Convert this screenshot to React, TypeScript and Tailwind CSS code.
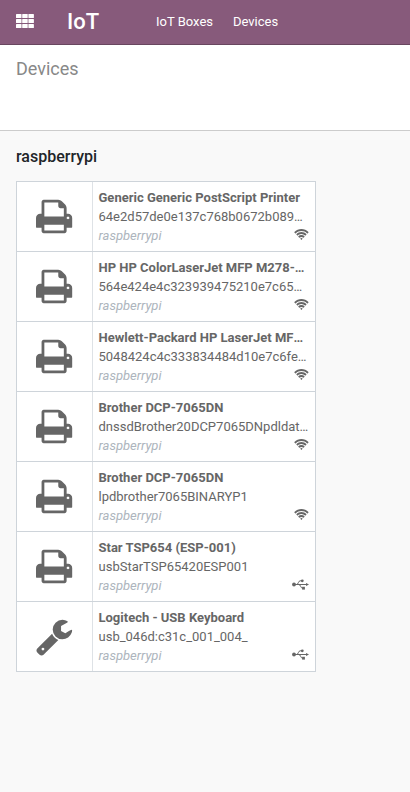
import React from "react";

type Device = { name: string; clipped?: boolean; identifier: string; kind: "printer" | "keyboard"; link: "wifi" | "usb" };

const devices: Device[] = [
  { name: "Generic Generic PostScript Printer", identifier: "64e2d57de0e137c768b0672b089…", kind: "printer", link: "wifi" },
  { name: "HP HP ColorLaserJet MFP M278-", clipped: true, identifier: "564e424e4c323939475210e7c65…", kind: "printer", link: "wifi" },
  { name: "Hewlett-Packard HP LaserJet MF", clipped: true, identifier: "5048424c4c333834484d10e7c6fe…", kind: "printer", link: "wifi" },
  { name: "Brother DCP-7065DN", identifier: "dnssdBrother20DCP7065DNpdldat…", kind: "printer", link: "wifi" },
  { name: "Brother DCP-7065DN", identifier: "lpdbrother7065BINARYP1", kind: "printer", link: "wifi" },
  { name: "Star TSP654 (ESP-001)", identifier: "usbStarTSP65420ESP001", kind: "printer", link: "usb" },
  { name: "Logitech - USB Keyboard", identifier: "usb_046d:c31c_001_004_", kind: "keyboard", link: "usb" },
];

function GridIcon() {
  return (
    <svg width="18" height="14" viewBox="0 0 18 14" fill="currentColor" aria-hidden="true">
      {[0, 5, 10].map((y) =>
        [0, 6.2, 12.4].map((x) => <rect key={`${x}-${y}`} x={x} y={y} width="5.5" height="4" rx="0.6" />)
      )}
    </svg>
  );
}

function PrintIcon() {
  return (
    <svg width="36.2" height="39" viewBox="64 0 1664 1792" fill="currentColor" aria-hidden="true">
      <path d="M448 1536h896v-256h-896v256zm0-640h896v-384h-160q-40 0-68-28t-28-68v-160h-640v640zm1152 64q0-26-19-45t-45-19-45 19-19 45 19 45 45 19 45-19 19-45zm128 0v416q0 13-9.5 22.5t-22.5 9.5h-224v160q0 40-28 68t-68 28h-960q-40 0-68-28t-28-68v-160h-224q-13 0-22.5-9.5t-9.5-22.5v-416q0-79 56.5-135.5t135.5-56.5h64v-544q0-40 28-68t68-28h672q40 0 88 20t76 48l152 152q28 28 48 76t20 88v256h64q79 0 135.5 56.5t56.5 135.5z" />
    </svg>
  );
}

function WrenchIcon() {
  return (
    <svg width="36.2" height="39" viewBox="64 0 1664 1792" fill="currentColor" aria-hidden="true">
      <path d="M448 1472q0-26-19-45t-45-19-45 19-19 45 19 45 45 19 45-19 19-45zm644-420l-682 682q-37 37-90 37-52 0-91-37l-106-108q-38-36-38-90 0-53 38-91l681-681q39 98 114.5 173.5t173.5 114.5zm634-435q0 39-23 106-47 134-164.5 217.5t-258.5 83.5q-185 0-316.5-131.5t-131.5-316.5 131.5-316.5 316.5-131.5q58 0 121.5 16.5t107.5 46.5q16 11 16 28t-16 28l-293 169v224l193 107q5-3 79-48.5t135.5-81 70.5-35.5q15 0 23.5 10t8.5 25z" />
    </svg>
  );
}

function WifiIcon() {
  return (
    <svg className="mb-px" width="14.86" height="14" viewBox="0 0 2048 1792" preserveAspectRatio="none" fill="currentColor" aria-hidden="true">
      <path d="M1024 1523q-20 0-93-73.5t-73-93.5q0-32 62.5-54t103.5-22 103.5 22 62.5 54q0 20-73 93.5t-93 73.5zm270-271q-2 0-40-25t-101.5-50-128.5-25-128.5 25-101 50-40.5 25q-18 0-93.5-75t-75.5-93q0-13 10-23 78-77 196-121t233-44 233 44 196 121q10 10 10 23 0 18-75.5 93t-93.5 75zm273-272q-11 0-23-8-136-105-252-154.5t-268-49.5q-85 0-170.5 22t-149 53-113.5 62-79 53-31 22q-17 0-92-75t-75-93q0-12 10-22 132-132 320-205t380-73 380 73 320 205q10 10 10 22 0 18-75 93t-92 75zm271-271q-11 0-22-9-179-157-371.5-236.5t-420.5-79.5-420.5 79.5-371.5 236.5q-11 9-22 9-17 0-92.5-75t-75.5-93q0-13 10-23 187-186 445-288t527-102 527 102 445 288q10 10 10 23 0 18-75.5 93t-92.5 75z" />
    </svg>
  );
}

function UsbIcon() {
  return (
    <svg className="mb-[2px]" width="17" height="13" viewBox="0 0 17 13" fill="none" stroke="currentColor" aria-hidden="true">
      <path d="M2 6.5H14.5M4.5 6.5C6.5 6.5 6.2 2.8 8.2 2.8H10M6.8 6.5C8.8 6.5 8.5 10.2 10.5 10.2H11" strokeWidth="1" />
      <circle cx="2" cy="6.5" r="1.9" fill="currentColor" stroke="none" />
      <circle cx="10.3" cy="2.8" r="1.4" fill="currentColor" stroke="none" />
      <rect x="10.1" y="8.8" width="2.8" height="2.8" fill="currentColor" stroke="none" />
      <path d="M14 4.9L17 6.5L14 8.1Z" fill="currentColor" stroke="none" />
    </svg>
  );
}

function DeviceCard({ device }: { device: Device }) {
  return (
    <article className="flex h-[71px] border border-[#ced4da] bg-white text-[#666666] not-first:-mt-px">
      <div className="flex w-[76px] shrink-0 items-center justify-center border-r border-[#dee2e6] pb-px">
        {device.kind === "printer" ? <PrintIcon /> : <WrenchIcon />}
      </div>
      <div className="min-w-0 flex-1 pt-[6px] pr-[6px] pl-[5.5px] text-[13px] leading-[19px] whitespace-nowrap">
        <h3 className="font-bold">
          {device.name}
          {device.clipped && <span className="inline-block">…</span>}
        </h3>
        <p>{device.identifier}</p>
        <div className="flex h-[19px] items-center justify-between">
          <em className="text-[#adb5bd]">raspberrypi</em>
          {device.link === "wifi" ? <WifiIcon /> : <UsbIcon />}
        </div>
      </div>
    </article>
  );
}

export default function App() {
  return (
    <div className="min-h-screen bg-[#f9f9f9] font-[Roboto,sans-serif] text-[13px]">
      <header className="flex h-[45px] items-center border-b border-[#68465f] bg-[#875a7b] pl-4 text-white">
        <button className="mb-[2px] w-[51px]" aria-label="Apps">
          <GridIcon />
        </button>
        <h1 className="w-[89px] text-[22px] leading-[44px] font-medium">IoT</h1>
        <nav className="flex gap-5 leading-[44px]">
          <a>IoT Boxes</a>
          <a>Devices</a>
        </nav>
      </header>
      <section className="h-[86px] border-b border-[#cccccc] bg-white px-4 pt-[10px]">
        <h2 className="text-[18px] leading-[27px] text-[#888888]">Devices</h2>
      </section>
      <main className="px-4 pt-[14px]">
        <h2 className="mb-[13px] text-[16px] leading-[23px] font-medium text-[#212529]">raspberrypi</h2>
        <div className="w-[300px]">
          {devices.map((device) => (
            <DeviceCard key={device.identifier} device={device} />
          ))}
        </div>
      </main>
    </div>
  );
}
